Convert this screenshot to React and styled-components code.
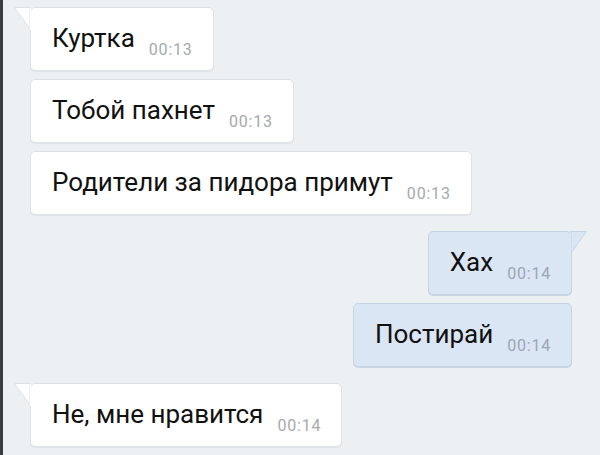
import React from 'react'
import styled, { createGlobalStyle } from 'styled-components'

const Global = createGlobalStyle`
  html, body { margin:0; padding:0; background:#edf0f3; }
  body { font-family: Roboto, "Noto Sans", sans-serif; }
`

const Screen = styled.div`
  width:600px;
  height:455px;
  box-sizing:border-box;
  border-left:3px solid #3a3d40;
  background:#edf0f3;
  overflow:hidden;
  display:flex;
  flex-direction:column;
  padding:7px 28px 0 27px;
`

const Group = styled.div`
  display:flex;
  flex-direction:column;
  align-items:${p => (p.out ? 'flex-end' : 'flex-start')};
  gap:8px;
  margin-bottom:16px;
`

const Bubble = styled.div`
  position:relative;
  height:64px;
  box-sizing:border-box;
  display:flex;
  align-items:flex-start;
  gap:14px;
  padding:15px 20px 0 21px;
  border-radius:5px;
  background:${p => (p.out ? '#dae6f4' : '#ffffff')};
  border:1px solid ${p => (p.out ? '#c6d4e4' : '#dde2e8')};
  box-shadow:0 1px 0 ${p => (p.out ? '#c9d6e5' : '#e0e4e9')};
`

const Text = styled.span`
  font-size:26px;
  line-height:30px;
  color:#111;
  white-space:nowrap;
`

const Time = styled.span`
  margin-top:18px;
  font-size:16px;
  line-height:18px;
  letter-spacing:0.8px;
  color:${p => (p.out ? '#9aa6b3' : '#a6a9ad')};
`

const Tail = styled.svg`
  position:absolute;
  top:-1px;
  ${p => (p.out ? 'right:-17px;' : 'left:-18px;')}
  width:18px;
  height:23px;
`

function Message({ out, tail, text, time }) {
  return (
    <Bubble out={out ? 1 : 0}>
      {tail && (
        <Tail out={out ? 1 : 0} viewBox="0 0 18 23">
          {out ? (
            <path d="M0 0.5 H16.5 L1 22 V0.5 Z" fill="#dae6f4" stroke="#c6d4e4" strokeWidth="1" />
          ) : (
            <path d="M18 0.5 H1.5 L17 22 V0.5 Z" fill="#ffffff" stroke="#dde2e8" strokeWidth="1" />
          )}
          <rect x={out ? 0 : 17} y="1" width="1" height="22" fill={out ? '#dae6f4' : '#ffffff'} />
        </Tail>
      )}
      <Text>{text}</Text>
      <Time out={out ? 1 : 0}>{time}</Time>
    </Bubble>
  )
}

const groups = [
  { out: false, items: [['Куртка', '00:13'], ['Тобой пахнет', '00:13'], ['Родители за пидора примут', '00:13']] },
  { out: true, items: [['Хах', '00:14'], ['Постирай', '00:14']] },
  { out: false, items: [['Не, мне нравится', '00:14']] },
]

export default function App() {
  return (
    <Screen>
      <Global />
      {groups.map((g, i) => (
        <Group key={i} out={g.out ? 1 : 0}>
          {g.items.map((m, k) => (
            <Message key={k} out={g.out} tail={k === 0} text={m[0]} time={m[1]} />
          ))}
        </Group>
      ))}
    </Screen>
  )
}
